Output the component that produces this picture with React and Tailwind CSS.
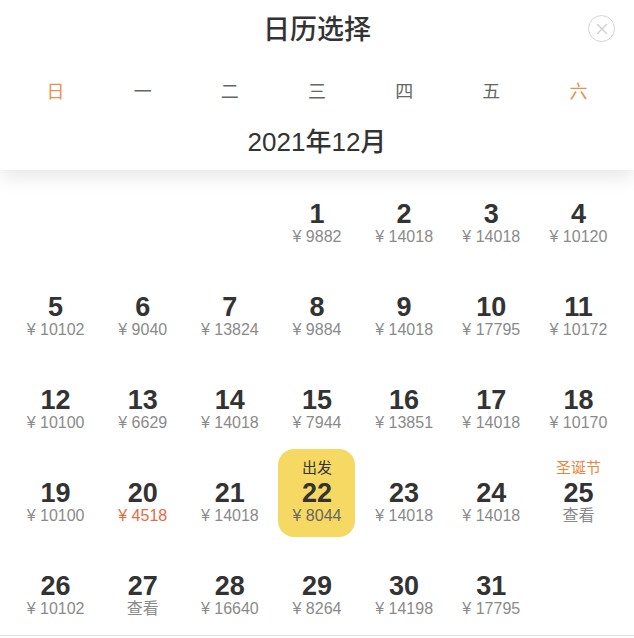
const weekdays = [
  { label: '日', weekend: true },
  { label: '一' },
  { label: '二' },
  { label: '三' },
  { label: '四' },
  { label: '五' },
  { label: '六', weekend: true },
];

const days = [
  null, null, null,
  { d: 1, p: '9882' }, { d: 2, p: '14018' }, { d: 3, p: '14018' }, { d: 4, p: '10120' },
  { d: 5, p: '10102' }, { d: 6, p: '9040' }, { d: 7, p: '13824' }, { d: 8, p: '9884' }, { d: 9, p: '14018' }, { d: 10, p: '17795' }, { d: 11, p: '10172' },
  { d: 12, p: '10100' }, { d: 13, p: '6629' }, { d: 14, p: '14018' }, { d: 15, p: '7944' }, { d: 16, p: '13851' }, { d: 17, p: '14018' }, { d: 18, p: '10170' },
  { d: 19, p: '10100' }, { d: 20, p: '4518', low: true }, { d: 21, p: '14018' }, { d: 22, p: '8044', selected: true, tag: '出发' }, { d: 23, p: '14018' }, { d: 24, p: '14018' }, { d: 25, view: true, holiday: '圣诞节' },
  { d: 26, p: '10102' }, { d: 27, view: true }, { d: 28, p: '16640' }, { d: 29, p: '8264' }, { d: 30, p: '14198' }, { d: 31, p: '17795' },
];

const DayCell = ({ day }) => {
  if (!day) return <div className="h-[93px]" />;
  const label = day.tag || day.holiday;
  return (
    <div className="h-[93px] flex justify-center">
      <div
        className={`w-[77px] h-[88px] rounded-[16px] flex flex-col items-center pt-[8px] ${
          day.selected ? 'bg-[#f6d963]' : ''
        }`}
      >
        <div
          className={`h-[22px] leading-[22px] text-[15px] ${
            day.selected ? 'text-[#333]' : 'text-[#e8863c]'
          }`}
        >
          {label || ''}
        </div>
        <div className="h-[28px] leading-[28px] text-[27px] font-bold text-[#333]">{day.d}</div>
        <div
          className={`h-[18px] leading-[18px] text-[16px] ${
            day.low ? 'text-[#e96a3c]' : day.selected ? 'text-[#666]' : 'text-[#8a8a8a]'
          }`}
        >
          {day.view ? '查看' : `¥ ${day.p}`}
        </div>
      </div>
    </div>
  );
};

const App = () => {
  return (
    <div
      className="w-[634px] h-[638px] bg-white overflow-hidden"
      style={{ fontFamily: '"Liberation Sans", "Noto Sans CJK SC", sans-serif' }}
    >
      {/* Header */}
      <div className="relative z-10 bg-white shadow-[0_8px_18px_rgba(0,0,0,0.09)] pb-[10px]">
        <div className="relative h-[60px] flex items-center justify-center">
          <span className="text-[27px] font-medium text-[#333]">日历选择</span>
          <button className="absolute right-[19px] top-[15px] w-[27px] h-[27px] rounded-full border-[1.5px] border-[#d4d4d4] flex items-center justify-center">
            <svg width="12" height="12" viewBox="0 0 12 12">
              <path d="M1.5 1.5 L10.5 10.5 M10.5 1.5 L1.5 10.5" stroke="#cfcfcf" strokeWidth="1.4" strokeLinecap="round" />
            </svg>
          </button>
        </div>
        <div className="grid grid-cols-7 px-[12px] h-[64px] items-center">
          {weekdays.map((w) => (
            <div
              key={w.label}
              className={`text-center text-[18px] ${w.weekend ? 'text-[#e8904c]' : 'text-[#666]'}`}
            >
              {w.label}
            </div>
          ))}
        </div>
        <div className="h-[36px] leading-[36px] text-center text-[26px] font-medium text-[#333]">
          2021年12月
        </div>
      </div>

      {/* Days */}
      <div className="grid grid-cols-7 px-[12px] border-b border-[#e2e2e2]">
        {days.map((day, i) => (
          <DayCell key={i} day={day} />
        ))}
      </div>
    </div>
  );
};

export default App;
